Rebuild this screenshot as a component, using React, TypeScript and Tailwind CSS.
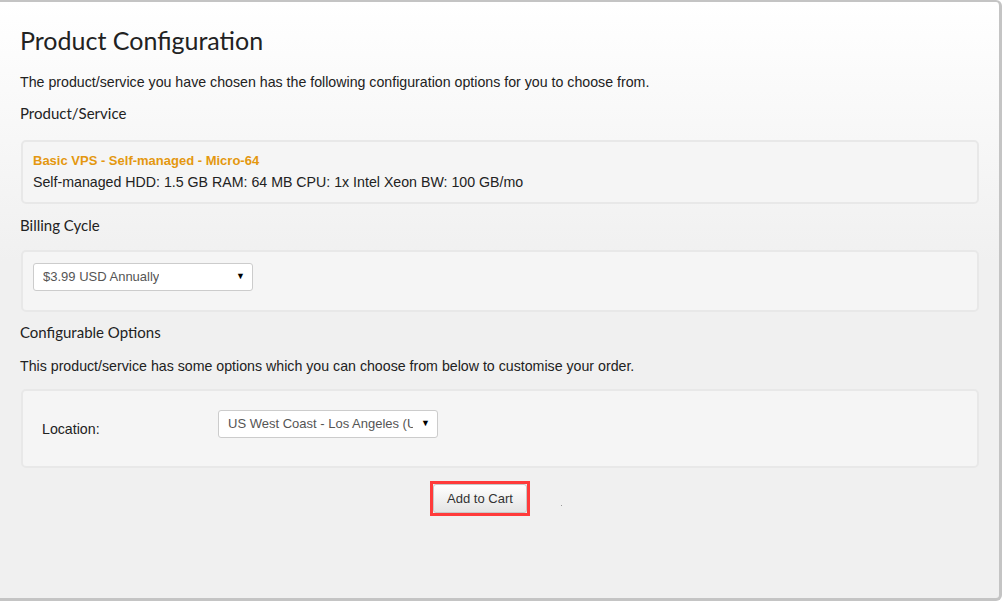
import React from 'react';

const heading = "font-['Lato','Open_Sans',sans-serif] text-[#222]";
const body = "font-['Liberation_Sans',Arial,sans-serif] text-[14.2px] leading-[18px] text-[#222]";

function FakeSelect({ value, width }: { value: string; width: string }) {
  return (
    <div
      className={`flex h-[28px] ${width} items-center justify-between rounded-[3px] border border-[#cccccc] bg-white pl-[9px] pr-[7px] font-['Liberation_Sans',Arial,sans-serif] text-[13px] text-[#555]`}
    >
      <span className="min-w-0 overflow-hidden whitespace-nowrap">{value}</span>
      <span className="ml-2 shrink-0 text-[9px] text-black">▼</span>
    </div>
  );
}

export default function App() {
  return (
    <div className="h-[601px] w-[1002px] overflow-hidden bg-white">
      <div className="h-[601px] rounded-r-[6px] border-t-2 border-r-[3px] border-b-[3px] border-[#c4c4c4] bg-[linear-gradient(to_bottom,#ffffff,#f0f0f0_260px)] pl-[21px] pr-[20px]">
        <h1 className={`${heading} -ml-px pt-[20px] text-[25px] leading-[36px]`}>Product Configuration</h1>
        <p className={`${body} -ml-px mt-[15px]`}>
          The product/service you have chosen has the following configuration options for you to choose from.
        </p>

        <h2 className={`${heading} -ml-px mt-[11px] text-[15px] leading-[22px]`}>Product/Service</h2>
        <div className="mt-[16px] rounded-[5px] border-2 border-[#e8e8e8] bg-[#f5f5f5] px-[10px] pt-[10px] pb-[11px]">
          <p className="font-['Liberation_Sans',Arial,sans-serif] text-[13px] leading-[18px] font-bold text-[#e4980f]">
            Basic VPS - Self-managed - Micro-64
          </p>
          <p className={`${body} mt-[3px]`}>
            Self-managed HDD: 1.5 GB RAM: 64 MB CPU: 1x Intel Xeon BW: 100 GB/mo
          </p>
        </div>

        <h2 className={`${heading} -ml-px mt-[10px] text-[15px] leading-[22px]`}>Billing Cycle</h2>
        <div className="mt-[14px] rounded-[5px] border-2 border-[#e8e8e8] bg-[#f5f5f5] pl-[10px] pt-[11px] pb-[19px]">
          <FakeSelect value="$3.99 USD Annually" width="w-[220px]" />
        </div>

        <h2 className={`${heading} -ml-px mt-[9px] text-[15px] leading-[22px]`}>Configurable Options</h2>
        <p className={`${body} -ml-px mt-[14px]`}>
          This product/service has some options which you can choose from below to customise your order.
        </p>
        <div className="mt-[14px] flex items-start rounded-[5px] border-2 border-[#e8e8e8] bg-[#f5f5f5] pl-[19px] pt-[19px] pb-[28px]">
          <label className={`${body} mt-[10px] w-[176px]`}>Location:</label>
          <FakeSelect value="US West Coast - Los Angeles (US)" width="w-[220px]" />
        </div>

        <div className="mt-[13px] flex items-end pl-[409px]">
          <div className="border-[3px] border-[#ff3b3b]">
            <button className="h-[29px] w-[94px] rounded-[3px] border border-[#c8c8c8] bg-[linear-gradient(to_bottom,#ffffff,#e4e4e4)] font-['Liberation_Sans',Arial,sans-serif] text-[13px] text-[#333]">
              Add to Cart
            </button>
          </div>
          <span className="mb-[10px] ml-[31px] h-px w-px bg-[#999]" />
        </div>
      </div>
    </div>
  );
}
